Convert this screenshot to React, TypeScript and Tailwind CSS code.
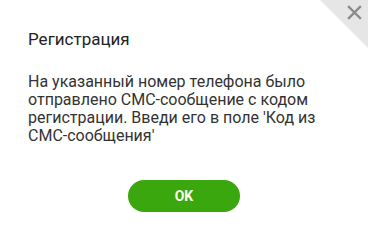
export default function App() {
  return (
    <div className="relative h-[240px] w-[368px] overflow-hidden bg-white font-['Roboto',sans-serif]">
      <svg className="absolute right-0 top-0" width="48" height="48" viewBox="0 0 48 48">
        <polygon points="0,0 48,0 48,48" fill="#e6e6e6" />
        <path d="M29 7 L40 18 M40 7 L29 18" stroke="#8a8a8a" strokeWidth="2.4" strokeLinecap="square" />
      </svg>

      <div className="px-[28px] pt-[29px]">
        <h1 className="text-[17px] leading-[20px] font-normal text-[#222]">Регистрация</h1>
        <p className="mt-[24px] text-[16px] leading-[18px] text-[#333]">
          На указанный номер телефона было отправлено СМС-сообщение с кодом регистрации. Введи его в поле 'Код из{" "}
          <span className="whitespace-nowrap">СМС-сообщения'</span>
        </p>
      </div>

      <div className="mt-[35px] flex justify-center">
        <button className="h-[32px] w-[112px] rounded-full bg-[#3ba70e] text-[14px] font-bold text-[#fdfdf0]">
          OK
        </button>
      </div>
    </div>
  );
}
